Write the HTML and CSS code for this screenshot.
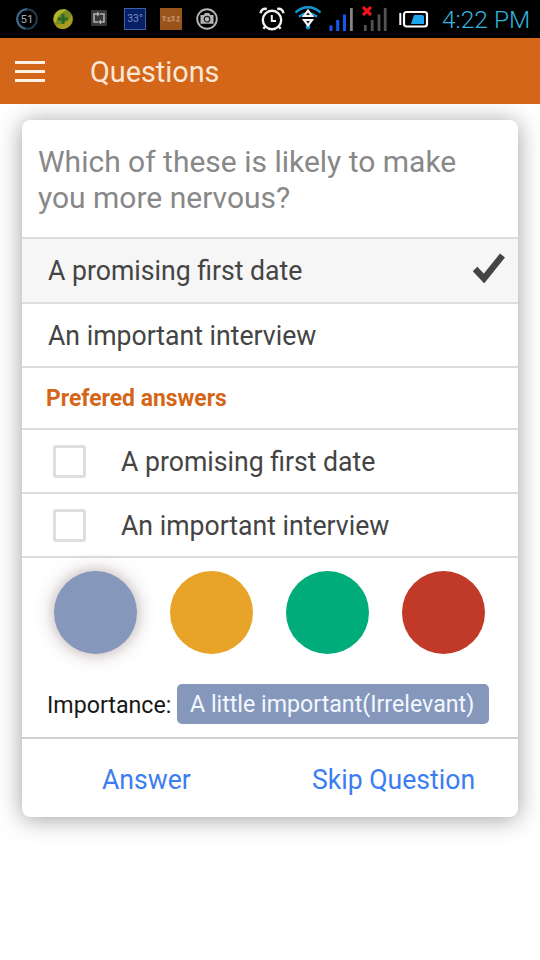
FILE: index.html
```html
<!DOCTYPE html>
<html lang="en">
<head>
<meta charset="utf-8">
<title>Questions</title>
<link rel="stylesheet" href="styles.css">
</head>
<body>
<header class="status">
  <div class="tray">
    <div class="meter">
      <svg class="ring" viewBox="0 0 24 24"><circle cx="12" cy="12" r="9.8" fill="none" stroke="#203d50" stroke-width="2"/><path d="M12 2.2a9.8 9.8 0 0 0-2 19.4" fill="none" stroke="#386b8d" stroke-width="2"/></svg>
      <span>51</span>
    </div>
    <svg class="ball" viewBox="0 0 22 22"><circle cx="11" cy="11" r="10" fill="#788c20"/><path d="M2 13C1 5 8 0 15 2 9 4 5 8 4 15z" fill="#b8b62b"/><path d="M3 16C10 18 16 14 20 7c2 7-3 14-9 14-4 0-7-2-8-5z" fill="#a99a20"/><path d="M9.5 6h3v3.5H16v3h-3.5V16h-3v-3.5H6v-3h3.5z" fill="#2d6825"/></svg>
    <svg class="sync" viewBox="0 0 18 18"><rect x="1" y="1" width="16" height="16" rx="1" fill="#383838"/><path d="M7 5H4v8h4M11 13h3V5h-4" fill="none" stroke="#b0b0b0" stroke-width="1.6"/><path d="M7 2.5 10 5 7 7.5zM11 10.5 8 13l3 2.5z" fill="#b0b0b0"/></svg>
    <span class="temp">33°</span>
    <svg class="poster" viewBox="0 0 22 22"><rect width="22" height="22" fill="#98541b"/><path d="M2 9h4M7 10h3M11 9h4M17 9h3M3 12h3M7 13h5M13 12h2M16 13h4" stroke="#c89b77" stroke-width="1"/><path d="M4 8v4M9 9v4M13 8v5M18 8v5" stroke="#c89b77"/></svg>
    <svg class="camera" viewBox="0 0 22 22"><circle cx="11" cy="11" r="9.8" fill="none" stroke="#b5b5b5" stroke-width="1.9"/><path d="M4.5 7h3.2L9 5h4l1.3 2h3.2v8.7h-13z" fill="#b5b5b5"/><circle cx="11" cy="11.2" r="2.8" fill="#b5b5b5" stroke="#171717" stroke-width="1.2"/></svg>
  </div>
  <div class="system">
    <svg class="alarm" viewBox="0 0 26 24"><g fill="none" stroke="#f2f2f2"><circle cx="13" cy="13" r="9.2" stroke-width="2.4"/><path d="M12.8 8v6H17" stroke-width="2"/><path d="M1.6 6.2C1.8 2.8 4.6 1 7.8 2M18.2 2c3.2-1 6 .8 6.2 4.2M6.2 19.5l-1.8 2.2M19.8 19.5l1.8 2.2" stroke-width="2.4"/></g></svg>
    <svg class="wifi" viewBox="0 0 28 24"><path d="M1.5 6.5Q14-3.8 26.5 6.5M5 10.8q9-7 18 0" fill="none" stroke="#1592d2" stroke-width="2.4"/><circle cx="14" cy="21" r="2.4" fill="#1592d2"/><path d="M14 4.6 18 10h-8zM10 14h8L14 19.5z" fill="#111" stroke="#f4f4f4" stroke-width="2.2"/></svg>
    <svg class="signal" viewBox="0 0 24 24"><path d="M2 17.5V23M8.7 12v11M15.5 6.5V23" stroke="#1558f0" stroke-width="3"/><path d="M22.4 0v23" stroke="#888" stroke-width="2.7"/></svg>
    <svg class="no-signal" viewBox="0 0 26 24"><path d="M4.3 17v6M11.2 12v11M18 6.5V23M24.2 0v23" stroke="#525252" stroke-width="2.8"/></svg>
    <svg class="cross" viewBox="0 0 10 10"><path d="m1 1 8 8M9 1 1 9" stroke="#ef131c" stroke-width="3.2"/></svg>
    <svg class="battery" viewBox="0 0 30 18"><path d="M1.3 3v12" stroke="#fff" stroke-width="2"/><rect x="5" y="2" width="23" height="14.5" rx="2.5" fill="none" stroke="#fff" stroke-width="2.2"/><path d="M15 5h8q2 0 2 2v7H12z" fill="#1ba6ed"/></svg>
    <time class="clock">4:22 PM</time>
  </div>
</header>
<nav class="bar">
  <div class="menu"><i></i><i></i><i></i></div>
  <h1>Questions</h1>
</nav>
<main class="card">
  <h2 class="question">Which of these is likely to make<br>you more nervous?</h2>
  <div class="row selected"><span class="choice">A promising first date</span><svg class="check" viewBox="0 0 32 30"><path d="M2 16 11 25.5 29.5 2.5" fill="none" stroke="#444" stroke-width="6.4"/></svg></div>
  <div class="row"><span class="choice">An important interview</span></div>
  <h3 class="preferred"><span>Prefered answers</span></h3>
  <div class="row option"><span class="box"></span><span class="choice">A promising first date</span></div>
  <div class="row option"><span class="box"></span><span class="choice">An important interview</span></div>
  <section class="rating">
    <div class="dots"><span class="dot blue"></span><span class="dot amber"></span><span class="dot green"></span><span class="dot red"></span></div>
    <div class="importance"><span class="label">Importance:</span><span class="badge">A little important(Irrelevant)</span></div>
  </section>
  <footer class="actions"><span class="answer">Answer</span><span class="skip">Skip Question</span></footer>
</main>
</body>
</html>
```
FILE: styles.css
```css
* { box-sizing: border-box; }
body { margin: 0; width: 540px; height: 960px; overflow: hidden; background: #fff; font-family: Roboto, sans-serif; color: #444; }
h1, h2, h3 { margin: 0; font-weight: 400; }
svg { display: block; flex: none; }
span, time, h1 { white-space: nowrap; }
.status { height: 38px; position: relative; z-index: 1; background: #000; display: flex; justify-content: space-between; }
.tray { display: flex; align-items: center; padding-left: 15px; }
.meter { display: grid; width: 24px; height: 24px; place-items: center; color: #a5adb3; font-size: 11.5px; }
.meter > * { grid-area: 1 / 1; }
.ring { width: 24px; height: 24px; }
.ball { width: 22px; height: 22px; margin-left: 13px; }
.sync { width: 18px; height: 18px; margin: -3px 0 0 16px; }
.temp { width: 22px; height: 22px; margin-left: 16px; border: 1px solid #3c62a2; background: #071f65; color: #7190bd; font-size: 10.5px; line-height: 20px; text-align: center; }
.poster { width: 22px; height: 22px; margin-left: 14px; }
.camera { width: 22px; height: 22px; margin-left: 14px; }
.system { display: flex; align-items: flex-start; }
.alarm { width: 26px; height: 24px; margin-top: 7px; }
.wifi { width: 28px; height: 24px; margin: 6px 0 0 9px; }
.signal { width: 24px; height: 24px; margin: 8px 0 0 7px; }
.no-signal { width: 26px; height: 24px; margin: 8px 0 0 8px; }
.cross { width: 10px; height: 10px; margin: 6px 15px 0 -25px; }
.battery { width: 30px; height: 18px; margin: 10px 0 0 12px; }
.clock { width: 88px; margin: 0 10px 0 13px; font-size: 24.5px; line-height: 40px; color: #36b3df; font-weight: 350; }
.bar { height: 66px; position: relative; z-index: 1; background: #d36618; display: flex; align-items: center; padding-left: 15px; color: #fbe7d8; }
.menu { width: 30px; display: grid; gap: 6px; }
.menu i { height: 3px; background: #fff0e3; }
.bar h1 { margin-left: 45px; font-size: 28.8px; line-height: 66px; padding-top: 1px; }
.card { width: 496px; height: 697px; margin: 16px 0 0 22px; border-radius: 8px; background: #fff; box-shadow: 0 0 1px rgba(0,0,0,.1), 0 2px 25px rgba(0,0,0,.38); }
.question { height: 117px; padding: 24px 0 0 16px; color: #888; font-size: 30px; line-height: 36px; }
.row { height: 64.5px; border-top: 2px solid #ddd; padding: 0 13px 0 26px; display: flex; align-items: center; font-size: 28px; }
.choice { padding-top: 1px; transform: scaleX(.951); transform-origin: 0 50%; }
.selected { background: #f6f6f6; justify-content: space-between; }
.check { width: 32px; height: 30px; margin-top: -4px; }
.preferred { height: 62px; border-top: 2px solid #ddd; padding-left: 24px; line-height: 60px; font-size: 24.5px; font-weight: 700; color: #d36618; }
.preferred span { display: inline-block; transform: scaleX(.934); transform-origin: 0 50%; }
.option { height: 64px; padding-left: 31px; }
.box { width: 33px; height: 33px; border: 3px solid #dedede; border-radius: 3px; margin-right: 35px; }
.rating { height: 181px; border-top: 2px solid #ddd; padding-top: 13px; }
.dots { display: flex; gap: 33px; padding-left: 32.4px; }
.dot { width: 83px; height: 83px; border-radius: 50%; }
.blue { background: #8598bc; box-shadow: 0 0 17px rgba(112,80,80,.5); }
.amber { background: #e8a329; }
.green { background: #00ac79; }
.red { background: #c13a28; }
.importance { display: flex; align-items: center; margin-top: 30px; padding-left: 25px; height: 40px; color: #181818; font-size: 23.2px; }
.label { width: 130px; padding-top: 2px; }
.badge { width: 312px; height: 40px; line-height: 41px; padding-left: 13px; border-radius: 5px; background: #8598bc; color: #f3f7ff; }
.actions { height: 80px; border-top: 2px solid #d2d2d2; display: flex; padding-left: 80px; line-height: 81px; font-size: 27.5px; color: #3d7df2; }
.answer { width: 210px; }
.answer, .skip { transform: scaleX(.967); transform-origin: 0 50%; }
```
